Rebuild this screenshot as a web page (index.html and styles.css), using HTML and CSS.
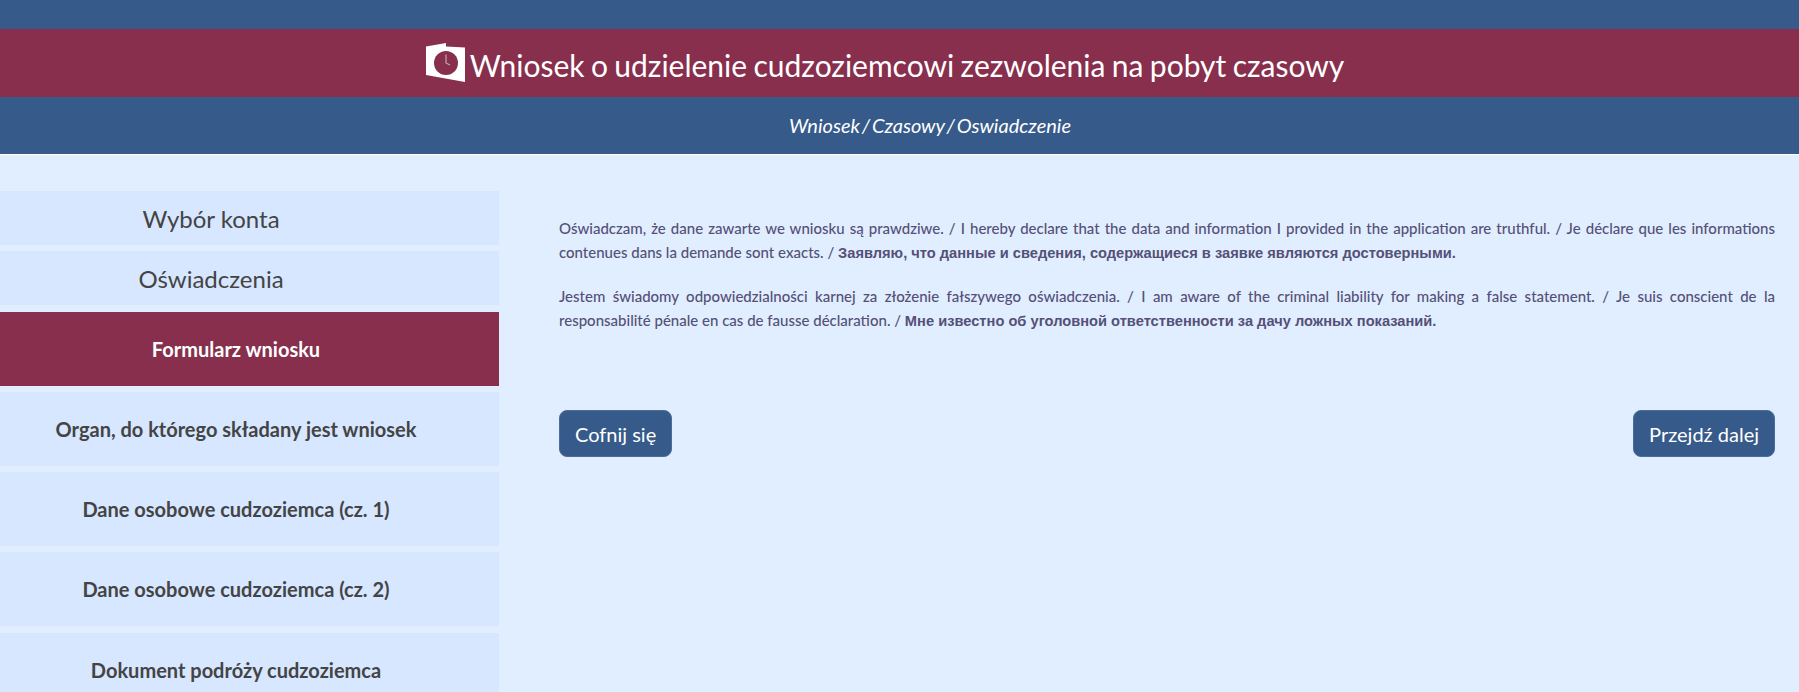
FILE: index.html
```html
<!DOCTYPE html>
<html lang="pl">
<head>
<meta charset="utf-8">
<title>Wniosek</title>
<link rel="stylesheet" href="styles.css">
</head>
<body>
<header class="header">
  <div class="title-bar">
    <svg class="title-icon" viewBox="0 0 39 40" aria-hidden="true">
      <path class="icon-page" d="M0 3.5 L20 0 V3.5 L39 4.5 V39 L0 32 Z"/>
      <circle class="icon-face" cx="20" cy="20" r="12"/>
      <path class="icon-hands" d="M20 11.5 V20 L24 22"/>
    </svg>
    <h1 class="title">Wniosek o udzielenie cudzoziemcowi zezwolenia na pobyt czasowy</h1>
  </div>
  <div class="crumbs">Wniosek / Czasowy / Oswiadczenie</div>
</header>
<div class="page">
  <nav class="side">
    <a class="step step-top">Wybór konta</a>
    <a class="step step-top">Oświadczenia</a>
    <a class="step step-sub step-active">Formularz wniosku</a>
    <a class="step step-sub">Organ, do którego składany jest wniosek</a>
    <a class="step step-sub">Dane osobowe cudzoziemca (cz. 1)</a>
    <a class="step step-sub">Dane osobowe cudzoziemca (cz. 2)</a>
    <a class="step step-sub">Dokument podróży cudzoziemca</a>
  </nav>
  <main class="main">
    <p class="para">Oświadczam, że dane zawarte we wniosku są prawdziwe. / I hereby declare that the data and information I provided in the application are truthful. / Je déclare que les informations contenues dans la demande sont exacts. / <b>Заявляю, что данные и сведения, содержащиеся в заявке являются достоверными.</b></p>
    <p class="para">Jestem świadomy odpowiedzialności karnej za złożenie fałszywego oświadczenia. / I am aware of the criminal liability for making a false statement. / Je suis conscient de la responsabilité pénale en cas de fausse déclaration. / <b>Мне известно об уголовной ответственности за дачу ложных показаний.</b></p>
    <div class="actions">
      <button class="btn">Cofnij się</button>
      <button class="btn">Przejdź dalej</button>
    </div>
  </main>
</div>
</body>
</html>
```
FILE: styles.css
```css
* { box-sizing: border-box; }
html, body { margin: 0; height: 692px; overflow: hidden; }
body { background: #e0eeff; font-family: Lato, "Liberation Sans", sans-serif; color: #444; }
.header { background: #365a8a; padding-top: 29px; height: 155px; border-bottom: 1px solid #fff; }
.title-bar { background: #872f4d; height: 68px; display: flex; justify-content: center; align-items: flex-start; gap: 5px; padding-right: 29px; }
.title-icon { width: 39px; height: 40px; margin-top: 14px; flex: none; }
.icon-page { fill: #fff; }
.icon-face { fill: #872f4d; }
.icon-hands { fill: none; stroke: #c9a3b2; stroke-width: 1.2; }
.title { margin: 0; color: #fff; font-size: 30px; font-weight: 400; line-height: 72px; word-spacing: -1.3px; }
.crumbs { height: 57px; line-height: 57px; color: #fff; font-style: italic; font-size: 20px; text-align: center; padding-left: 61px; word-spacing: -2.9px; }
.page { display: flex; align-items: flex-start; }
.side { width: 499px; flex: none; padding-top: 36px; display: flex; flex-direction: column; gap: 6.25px; }
.step { display: flex; justify-content: center; align-items: center; background: #d6e7ff; }
.step-top { height: 54px; font-size: 24px; padding-right: 77px; }
.step-sub { height: 74px; font-size: 20px; font-weight: 700; padding-right: 27px; }
.step-active { background: #872f4d; color: #fff; }
.main { flex: 1; padding: 61px 24px 0 60px; color: #555077; }
.para { margin: 0 0 20px; font-size: 15px; line-height: 24px; text-align: justify; font-weight: 500; }
.para b { font-family: "Liberation Sans", sans-serif; font-size: 14.67px; line-height: 1; }
.actions { display: flex; justify-content: space-between; margin-top: 78px; }
.btn { height: 47px; padding: 0 15px; background: #365a8a; color: #fff; border: 1px solid #4a6d9c; border-radius: 8px; font: 400 20px Lato, sans-serif; }
```
